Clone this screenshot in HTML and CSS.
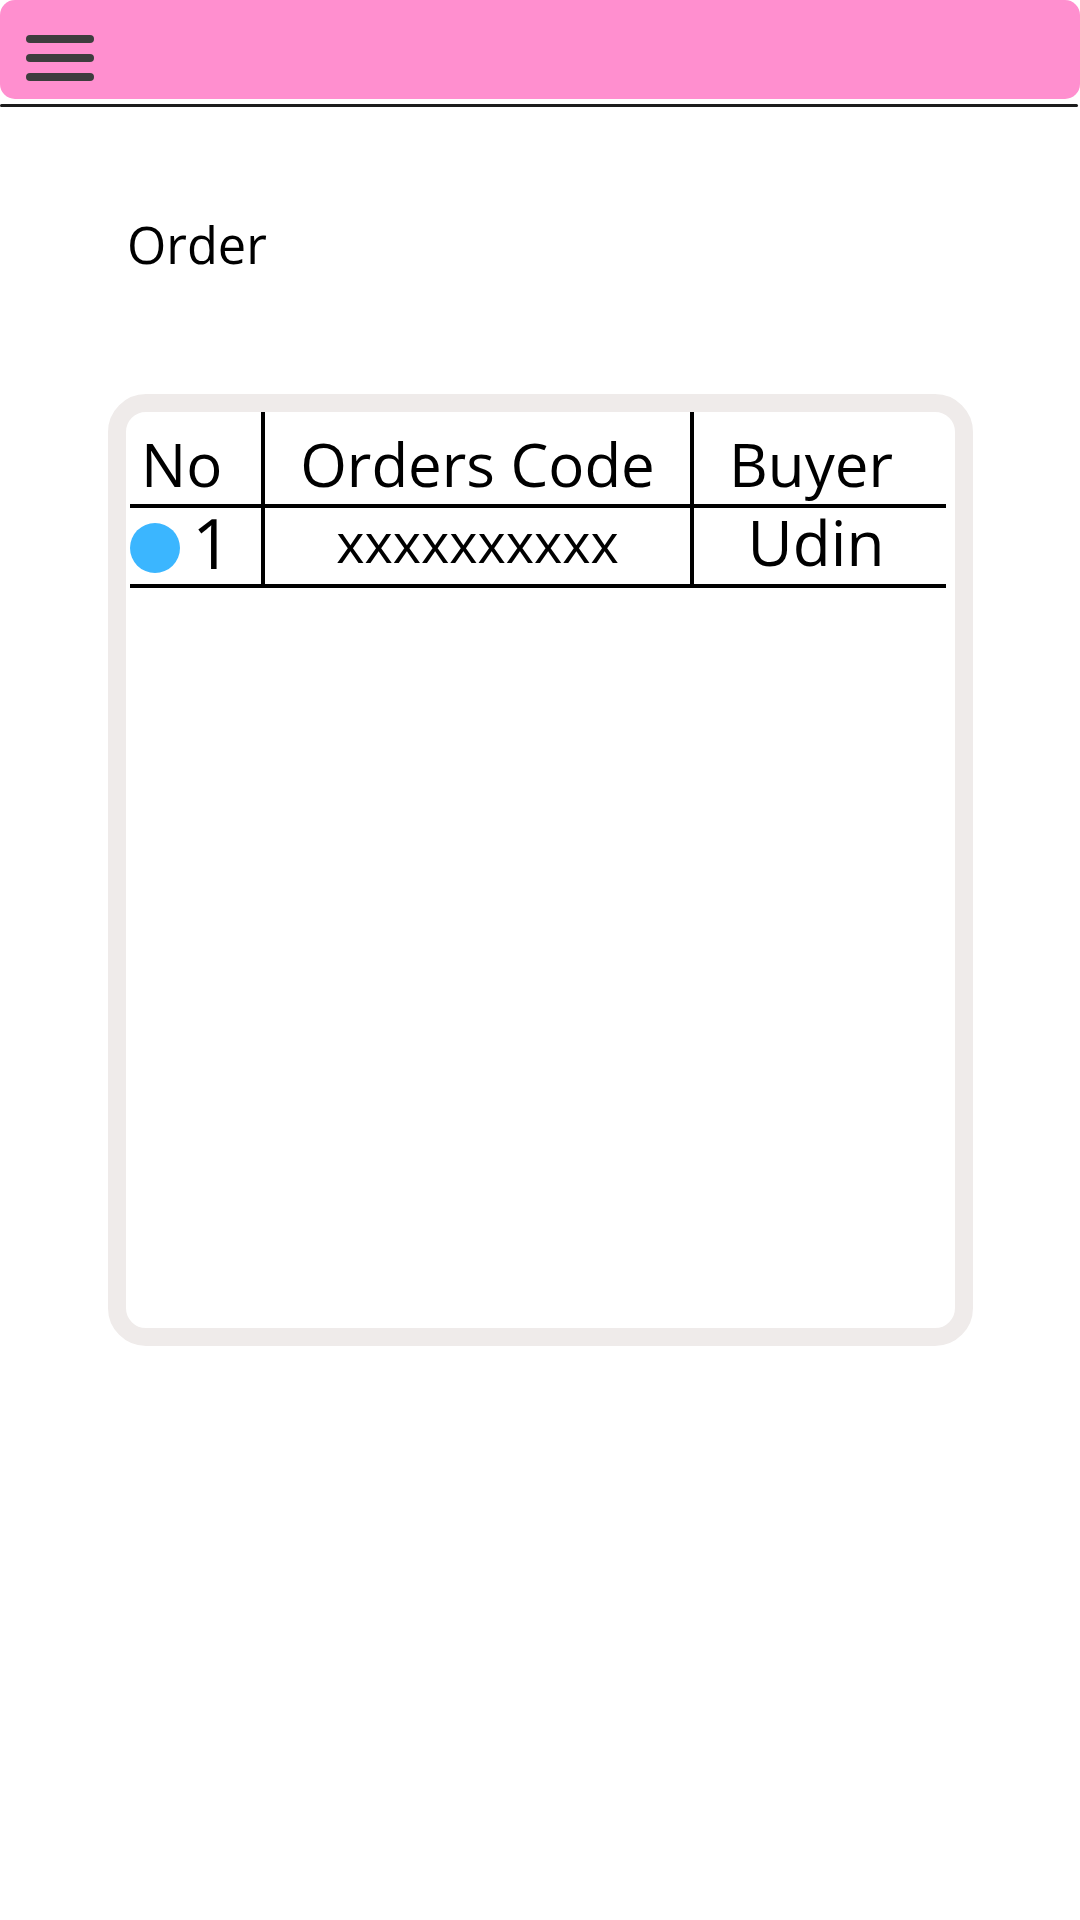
FILE: index.html
```html
<!DOCTYPE html>
<html>
<head>
<meta charset="utf-8">
<link rel="stylesheet" href="styles.css">
</head>
<body>
<header class="topbar">
  <div class="burger"><span></span><span></span><span></span></div>
</header>
<div class="rule"></div>
<h1 class="title">Order</h1>
<section class="card">
  <div class="table">
    <div class="row head">
      <div class="cell c1">No</div>
      <div class="cell c2">Orders Code</div>
      <div class="cell c3">Buyer</div>
    </div>
    <div class="row body">
      <div class="cell c1"><span class="dot"></span><span class="num">1</span></div>
      <div class="cell c2 code">xxxxxxxxxx</div>
      <div class="cell c3 buyer">Udin</div>
    </div>
  </div>
</section>
</body>
</html>
```

FILE: styles.css
```css
html, body {
  margin: 0;
  padding: 0;
  background: #ffffff;
}
body {
  width: 1080px;
  height: 1920px;
  font-family: "Open Sans", "Noto Sans", sans-serif;
  color: #000;
}
.topbar {
  height: 99px;
  background: #ff8fcf;
  border-radius: 15px;
  box-sizing: border-box;
  padding: 35px 0 0 26px;
}
.burger {
  display: flex;
  flex-direction: column;
  gap: 11px;
}
.burger span {
  display: block;
  width: 68px;
  height: 8px;
  border-radius: 4px;
  background: #3d3d3d;
}
.rule {
  margin-top: 5px;
  width: 1078px;
  height: 3px;
  background: #1c1c1c;
  border-radius: 2px;
}
.title {
  margin: 104px 0 0 127px;
  font-size: 50.5px;
  font-weight: 400;
  line-height: 68px;
}
.card {
  margin: 115px 0 0 108px;
  width: 865px;
  height: 952px;
  box-sizing: border-box;
  border: 18px solid #efebea;
  border-radius: 38px;
}
.table {
  margin-left: 4px;
  width: 816px;
}
.row {
  display: flex;
  border-bottom: 4px solid #000;
}
.cell {
  box-sizing: border-box;
}
.c1 {
  width: 135px;
  border-right: 4px solid #000;
}
.c2 {
  width: 429px;
  border-right: 4px solid #000;
  text-align: center;
}
.c3 {
  width: 252px;
  text-align: center;
}
.head .cell {
  height: 92px;
  padding-top: 12px;
  font-size: 60px;
  line-height: 80px;
}
.head .c1 {
  padding-left: 11px;
}
.head .c3 {
  padding-right: 18px;
}
.body .cell {
  height: 76px;
  line-height: 68px;
}
.body .c1 {
  display: flex;
  align-items: flex-start;
}
.dot {
  flex: none;
  width: 50px;
  height: 50px;
  margin-top: 15px;
  border-radius: 50%;
  background: #3bb6ff;
}
.num {
  font-size: 70px;
  margin-left: 12px;
}
.code {
  font-size: 54px;
}
.buyer {
  font-size: 62px;
  padding-right: 8px;
}
```
